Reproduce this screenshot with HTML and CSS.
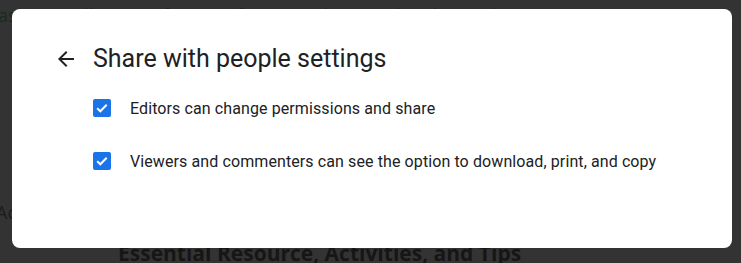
FILE: index.html
```html
<!DOCTYPE html>
<html>
<head>
<meta charset="utf-8">
<link rel="stylesheet" href="styles.css">
</head>
<body>
<div class="page">
  <div class="bg-top">as<span class="bg-top-rest">ccess will remain for any of your students and authorized users</span></div>
  <div class="bg-left">Ad</div>
  <div class="bg-heading">Essential Resource, Activities, and Tips</div>
</div>
<div class="dialog">
  <div class="header">
    <svg class="back" viewBox="0 0 24 24" width="24" height="24"><path d="M20 11H7.83l5.59-5.59L12 4l-8 8 8 8 1.41-1.41L7.83 13H20v-2z" fill="#202124"/></svg>
    <h1 class="title">Share with people settings</h1>
  </div>
  <div class="options">
    <label class="option">
      <span class="box"><svg viewBox="0 0 18 18" width="18" height="18"><path d="M4.2 9.2l3.1 3.1 6.4-6.6" fill="none" stroke="#fff" stroke-width="2"/></svg></span>
      <span class="text">Editors can change permissions and share</span>
    </label>
    <label class="option">
      <span class="box"><svg viewBox="0 0 18 18" width="18" height="18"><path d="M4.2 9.2l3.1 3.1 6.4-6.6" fill="none" stroke="#fff" stroke-width="2"/></svg></span>
      <span class="text">Viewers and commenters can see the option to download, print, and copy</span>
    </label>
  </div>
</div>
</body>
</html>
```
FILE: styles.css
```css
html, body {
  margin: 0;
  padding: 0;
  width: 741px;
  height: 263px;
  overflow: hidden;
  background: #333333;
}
.page {
  position: relative;
  width: 741px;
  height: 263px;
  font-family: "Open Sans", sans-serif;
  color: #1c1c1c;
}
.bg-top {
  position: absolute;
  left: -2px;
  top: 3px;
  font-size: 18px;
  color: #1c2a1c;
  white-space: nowrap;
}
.bg-left {
  position: absolute;
  left: -4px;
  top: 200px;
  font-size: 18px;
  color: #1c1c1c;
}
.bg-heading {
  position: absolute;
  left: 118px;
  top: 239px;
  font-size: 21px;
  font-weight: 700;
  color: #161616;
  white-space: nowrap;
}
.dialog {
  position: absolute;
  left: 12px;
  top: 9px;
  width: 720px;
  height: 239px;
  background: #fff;
  border-radius: 8px;
  box-sizing: border-box;
  padding: 36px 0 0 42px;
  font-family: Roboto, "Noto Sans", sans-serif;
}
.header {
  display: flex;
  align-items: center;
  gap: 15px;
  height: 28px;
}
.back {
  display: block;
  flex: none;
}
.title {
  margin: 0;
  font-size: 25px;
  font-weight: 400;
  color: #202124;
  line-height: 28px;
}
.options {
  display: flex;
  flex-direction: column;
  gap: 35px;
  margin-top: 26px;
  padding-left: 39px;
}
.option {
  display: flex;
  align-items: center;
  gap: 19px;
  height: 18px;
}
.box {
  width: 18px;
  height: 18px;
  background: #1a73e8;
  border-radius: 2px;
  display: block;
  flex: none;
}
.box svg {
  display: block;
}
.text {
  font-size: 16px;
  color: #202124;
  letter-spacing: 0.1px;
}
```
